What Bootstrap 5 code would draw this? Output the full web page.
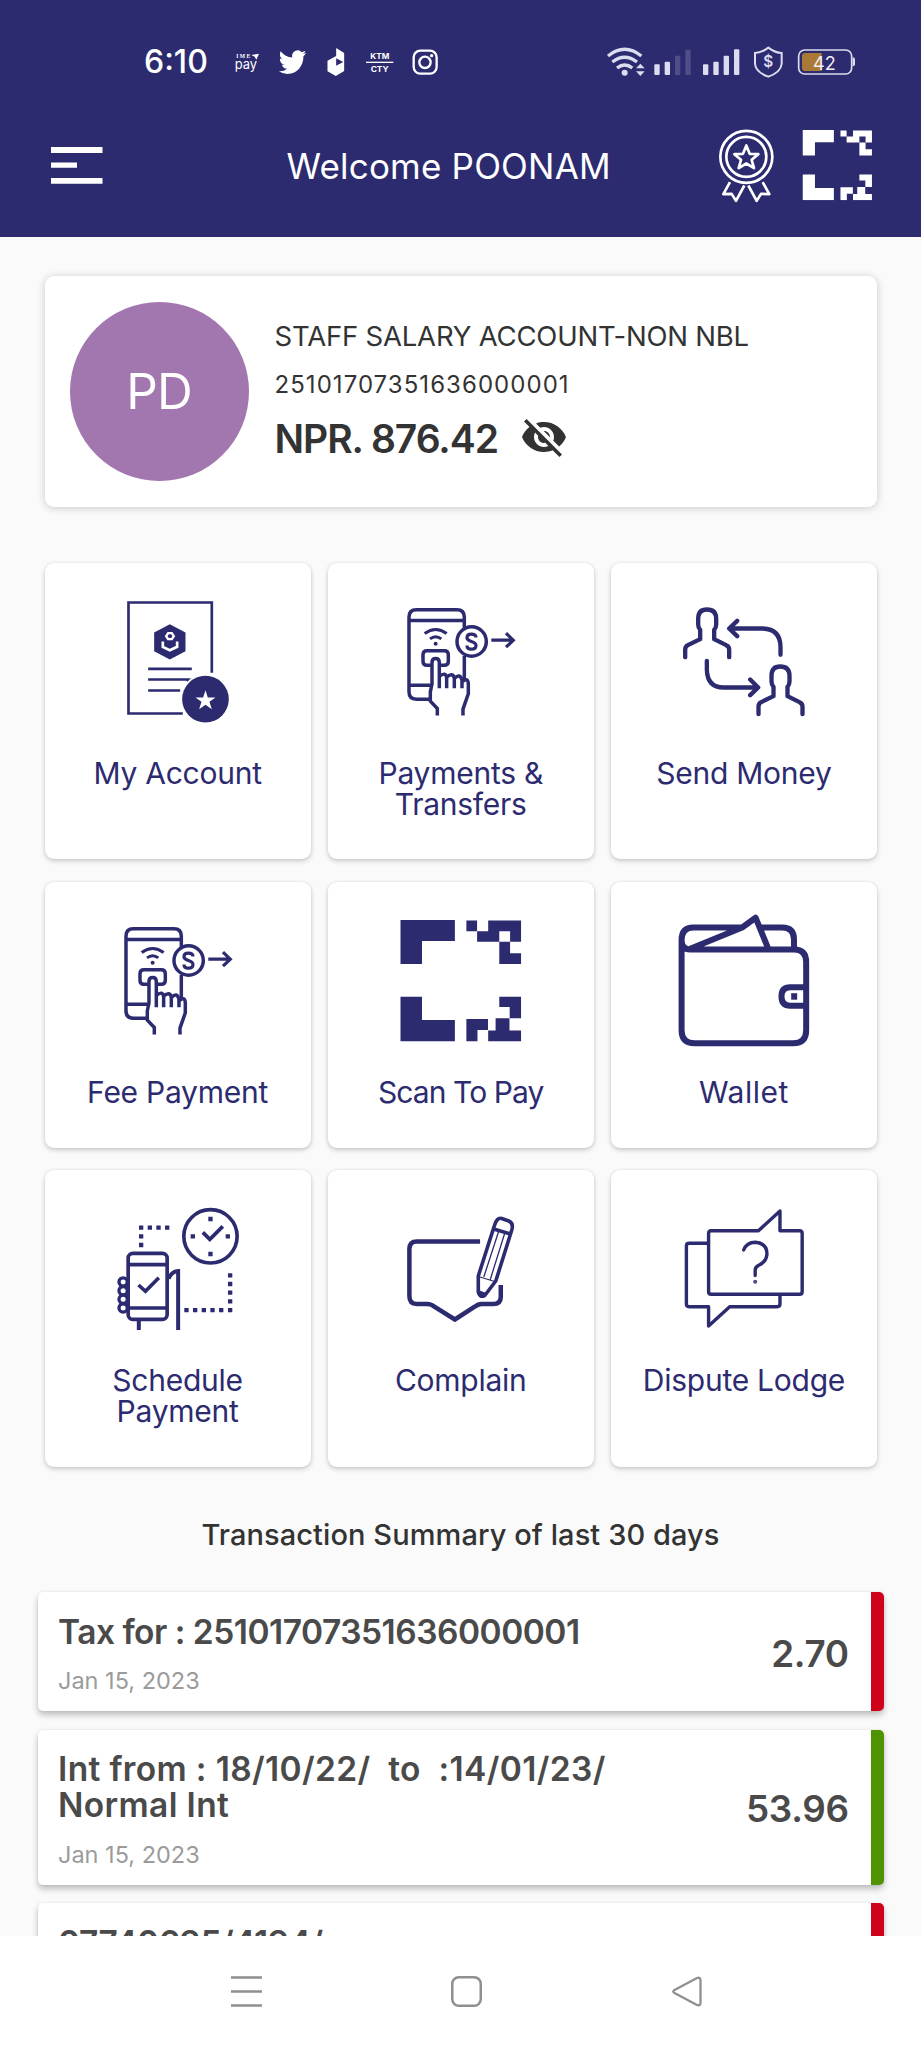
<!DOCTYPE html>
<html lang="en">
<head>
<meta charset="utf-8">
<meta name="viewport" content="width=device-width, initial-scale=1">
<title>Mobile banking</title>
<link href="https://cdn.jsdelivr.net/npm/bootstrap@5.3.0/dist/css/bootstrap.min.css" rel="stylesheet">
<style>
  :root { --navy: #2d2b70; }
  body { font-family: "Inter", "Liberation Sans", sans-serif; background: #fafafa; color: #333; height: 2048px; overflow: hidden; }
  svg { display: block; flex: none; overflow: visible; }
  .ln { fill: none; stroke: currentColor; }
  .app-head { background: var(--navy); height: 237px; color: #fff; }
  .status-row { height: 124px; padding: 0 65px 0 144px; }
  .clock { font-size: 32px; line-height: 40px; font-weight: 500; width: 91px; }
  .notifs { gap: 20px; }
  .sys-icons { gap: 12px; color: #dcdcf0; }
  .app-title { font-size: 35px; line-height: 44px; letter-spacing: .2px; margin-left: 183.5px; width: 433px; }
  .title-row { padding-left: 51px; height: 83px; }
  .scan-btn { margin-left: 30.5px; }
  .panel { background: #fff; border-radius: 9px; box-shadow: 0 2px 5px rgba(0,0,0,.2), 0 0 3px rgba(0,0,0,.06); }
  .account { margin: 39px 44px 0 44.5px; height: 231px; padding-left: 25px; box-shadow: 0 1px 9px rgba(0,0,0,.2); }
  .avatar { width: 179px; height: 179px; background: #a277b0; color: #fff; font-size: 49.5px; letter-spacing: -1px; }
  .acc-info { margin-left: 26px; padding-top: 44px; }
  .acc-name { font-size: 27.5px; line-height: 32px; letter-spacing: -.2px; }
  .acc-no { font-size: 24px; line-height: 30px; margin-top: 18px; letter-spacing: 1.05px; }
  .acc-bal { font-size: 39px; line-height: 48px; font-weight: 600; letter-spacing: -1.05px; margin-top: 15px; }
  .eye-off { margin: 13px 0 0 22px; }
  .tiles { display: grid; grid-template-columns: repeat(3, 1fr); grid-template-rows: 296.5px 266px 296.7px; gap: 22.6px 17px; margin: 55.5px 44px 0 44.5px; }
  .tile { color: var(--navy); text-align: center; }
  .tile svg { width: 100%; height: 180px; }
  .tile-label { font-size: 30px; line-height: 31px; letter-spacing: -.25px; margin-top: 15px; }
  .label-snug { letter-spacing: -.9px; }
  .label-wide { letter-spacing: .5px; }
  .sum-title { font-size: 29px; line-height: 36px; font-weight: 500; letter-spacing: .08px; margin-top: 50px; text-align: center; }
  .feed { height: 383px; padding: 39.5px 37.3px 0 38px; overflow: hidden; }
  .entry { background: #fff; border-radius: 5px; box-shadow: 0 4px 6px rgba(0,0,0,.24), 0 0 3px rgba(0,0,0,.08); border-right: 13px solid #d0021b; color: #4a4a4a; margin-bottom: 18.5px; padding: 0 22px 0 20px; }
  .entry.credit { border-right-color: #4f9400; }
  .entry-text { font-size: 33.5px; line-height: 36px; font-weight: 600; padding-top: 21.5px; letter-spacing: .36px; }
  .entry-text.tight { letter-spacing: -.5px; }
  .entry-date { font-size: 23.5px; line-height: 28px; color: #9b9b9b; margin-top: 17.5px; padding-bottom: 16px; }
  .entry-amt { font-size: 36.8px; font-weight: 600; letter-spacing: -.3px; padding-top: 3px; }
  .sysbar { height: 112.5px; background: #fff; padding: 40.5px 219px 0 231px; color: #8f8f8f; }
</style>
</head>
<body>
<svg width="0" height="0" class="position-absolute" aria-hidden="true">
  <symbol id="scan" viewBox="400 920 121 121.4" preserveAspectRatio="none">
    <path fill="currentColor" fill-rule="evenodd" d="M400 919.7H454.6V941H421.7V964H400ZM466.1 920.7H476.8V931.3H466.1ZM487.9 920.7H520.9V941.8H476.8V931.3H487.9ZM499 931.3V941.8H509.8V931.3ZM499 941.8H509.8V953.3H520.9V964H499ZM400 996.7H421.7V1020H454.6V1041.3H400ZM499 996.7H520.9V1018.3H509.4V1007H499ZM466.1 1019H487.7V1030H477.2V1041.3H466.1ZM495.3 1018.3H509.2V1030.5H520.9V1041.3H487.9V1030.5H495.3Z"/>
  </symbol>
  <symbol id="paytap" viewBox="23 37.5 798.6 540">
    <g class="ln" stroke-width="10.5">
      <path d="M330 446H288Q266 446 266 424V200Q266 178 288 178H410Q432 178 432 200V232M432 316V388M266 210H432M266 404H332"/>
      <circle cx="454" cy="273" r="44"/>
      <path d="M467 261Q467 251 453 251Q440 251 440 262Q440 269 453 273Q467 277 467 285Q467 296 453 296Q440 296 440 285M513 269H577M557 248L579 269L557 290" stroke-width="9.500"/>
      <path d="M313 249Q346 225 379 249M329 265Q346 252 363 265" stroke-width="9"/>
      <path d="M334 344H320Q308 344 308 332V313Q308 301 320 301H372Q384 301 384 313V332Q384 344 372 344H360"/>
      <path d="M351 495V474L330 452V424L335 400V336Q335 324 346 324Q357 324 357 336V413M357 378Q376 362 379 382V413M379 380Q398 364 402 384V413M402 384Q420 366 425 390V413M425 394Q444 378 444 402V430L428 476V495"/>
    </g>
    <circle cx="346" cy="280" r="6" fill="currentColor"/>
  </symbol>
</svg>

<header class="app-head">
  <div class="status-row d-flex align-items-center">
    <div class="clock">6:10</div>
    <div class="notifs d-flex">
      <svg width="23.500" height="32" viewBox="705 76 70.5 96" fill="#fff"><text x="709" y="113" font-size="17" font-family="Liberation Serif" font-weight="700" textLength="42">IME</text><text x="704" y="144" font-size="41" textLength="67" lengthAdjust="spacingAndGlyphs">pay</text><path d="M754 103L777 99L769 117L764 108Z"/></svg>
      <svg width="27" height="32" viewBox="835.5 76 81 96" fill="#fff"><path transform="translate(835 80.6) scale(3.42 3.64)" d="M23.950 4.570a10 10 0 0 1-2.820.78 4.960 4.960 0 0 0 2.160-2.730c-.95.56-2 .96-3.130 1.190a4.920 4.920 0 0 0-8.380 4.480C7.690 8.100 4.070 6.130 1.640 3.160a4.820 4.820 0 0 0-.67 2.480c0 1.710.87 3.210 2.190 4.100a4.900 4.900 0 0 1-2.230-.62v.06a4.920 4.920 0 0 0 3.950 4.830 5 5 0 0 1-2.210.08 4.940 4.940 0 0 0 4.600 3.420A9.870 9.870 0 0 1 0 19.540a13.990 13.990 0 0 0 7.550 2.210c9.050 0 14-7.500 14-13.980 0-.21 0-.42-.02-.63a9.940 9.940 0 0 0 2.460-2.550z"/></svg>
      <svg width="20" height="32" viewBox="978.5 76 60 96" fill="#fff"><path fill-rule="evenodd" d="M1009 82L1033 97V151L1008 166L983 152V120L1009 106ZM1009 113V135L1030 124Z"/></svg>
      <svg width="27" height="32" viewBox="1100 76 81 96" fill="#fff" font-weight="700" font-size="24"><text x="1113" y="114" textLength="57" lengthAdjust="spacingAndGlyphs">KTM</text><path d="M1100 123H1182V127H1100Z"/><text x="1114" y="154" textLength="54" lengthAdjust="spacingAndGlyphs">CTY</text></svg>
      <svg width="25.300" height="32" viewBox="1238 76 76 96"><g class="ln" stroke="#fff" stroke-width="7"><rect x="1240" y="90" width="69" height="69" rx="20"/><circle cx="1274" cy="125" r="17"/></g><circle cx="1294" cy="105" r="5" fill="#fff"/></svg>
    </div>
    <div class="sys-icons d-flex ms-auto">
      <svg width="35" height="32" viewBox="141 76 105 96"><g class="ln" stroke-width="10"><path d="M144 106Q194 66 244 106M157 124Q194 95 231 124M171 142Q194 124 217 142"/></g><circle cx="194" cy="156" r="9" fill="currentColor"/><path fill="currentColor" d="M241 129L254 143H228ZM241 166L254 152H228Z"/></svg>
      <svg width="37" height="32" viewBox="282 76 111 96" fill="currentColor"><rect x="283" y="131" width="16" height="32" rx="3"/><rect x="314" y="123" width="16" height="40" rx="3"/><rect x="345" y="105" width="16" height="58" rx="3" opacity=".2"/><rect x="376" y="87" width="16" height="76" rx="3" opacity=".2"/></svg>
      <svg width="37" height="32" viewBox="428 76 111 96" fill="currentColor"><rect x="428" y="131" width="16" height="32" rx="3"/><rect x="459" y="123" width="16" height="40" rx="3"/><rect x="490" y="105" width="16" height="58" rx="3"/><rect x="521" y="86" width="16" height="77" rx="3"/></svg>
      <svg width="34" height="32" viewBox="578 76 102 96"><path class="ln" stroke-width="6" d="M627 81Q648 97 667 97V130Q664 155 627 168Q590 155 587 130V97Q606 97 627 81Z"/><text x="627" y="140" text-anchor="middle" font-size="46" font-weight="600" fill="currentColor">$</text></svg>
      <svg width="58" height="32" viewBox="717 76 174 96"><rect class="ln" stroke-width="5" x="719" y="88" width="159" height="72" rx="18"/><path fill="#a87a35" d="M739 97H788V151H739Q729 151 729 141V107Q729 97 739 97Z"/><text x="796" y="147" text-anchor="middle" font-size="57" fill="#f2eef0" textLength="68" lengthAdjust="spacingAndGlyphs">42</text><path fill="currentColor" d="M881 110Q888 110 888 116V131Q888 137 881 137Z"/></svg>
    </div>
  </div>
  <div class="title-row d-flex align-items-center">
    <svg width="52" height="37" viewBox="0 0 52 37" fill="#fff"><path d="M0 0H51.500V6H0ZM0 15.500H26V20.800H0ZM0 31H51.500V36.700H0Z"/></svg>
    <div class="app-title">Welcome POONAM</div>
    <svg width="54" height="73" viewBox="482 328 162 218"><g class="ln" stroke="#fff" stroke-width="8" stroke-linejoin="round"><circle cx="561" cy="411" r="78"/><circle cx="561" cy="411" r="60"/><path d="M561 377L571 402L597 403L577 420L584 445L561 431L538 445L545 420L525 403L551 402Z"/><path d="M512 487L492 523L517 522L530 543L555 497M610 487L630 523L605 522L592 543L567 497"/></g></svg>
    <svg class="scan-btn" width="69.500" height="70.300"><use href="#scan" x="-1.500"/></svg>
  </div>
</header>

<section class="panel account d-flex align-items-center">
  <div class="avatar rounded-circle d-flex align-items-center justify-content-center">PD</div>
  <div class="acc-info align-self-start">
    <div class="acc-name">STAFF SALARY ACCOUNT-NON NBL</div>
    <div class="acc-no">25101707351636000001</div>
    <div class="d-flex"><div class="acc-bal">NPR. 876.42</div>
      <svg class="eye-off" width="48" height="48" viewBox="0 0 24 24"><path fill="#333" d="M12 7c2.760 0 5 2.240 5 5 0 .65-.13 1.260-.36 1.830l2.920 2.920c1.510-1.260 2.700-2.890 3.430-4.750-1.730-4.390-6-7.500-11-7.500-1.400 0-2.740.25-3.980.7l2.160 2.160C10.740 7.130 11.350 7 12 7zM2 4.270l2.280 2.280.46.46C3.080 8.300 1.780 10.020 1 12c1.730 4.390 6 7.500 11 7.500 1.550 0 3.030-.3 4.380-.84l.42.42L19.730 22 21 20.730 3.270 3 2 4.270zM7.530 9.800l1.550 1.550c-.05.21-.08.43-.08.65 0 1.660 1.340 3 3 3 .22 0 .44-.03.65-.08l1.550 1.550c-.67.33-1.410.53-2.200.53-2.760 0-5-2.240-5-5 0-.79.2-1.530.53-2.200zm4.310-.78l3.150 3.150.02-.16c0-1.660-1.340-3-3-3l-.17.01z"/></svg>
    </div>
  </div>
</section>

<main class="tiles">
  <div class="panel tile">
    <svg viewBox="43.5 37.5 798.6 540"><path class="ln" stroke-width="8" d="M457 489H294V156H544V367M353 355H484M353 387H472L468 391M353 420H449"/><path fill="currentColor" d="M418 221L465 246V302L418 327L371 302V246Z"/><path fill="none" stroke="#fff" stroke-width="8" d="M397 273V289L418 299L440 289V273"/><path fill="none" stroke="#fff" stroke-width="7" d="M413 248H424L430 257L424 266H413L407 257Z"/><circle cx="525" cy="446" r="70" fill="currentColor"/><path fill="#fff" d="M525 419L532 441H555L537 454L544 476L525 463L506 476L513 454L495 441H518Z"/></svg>
    <div class="tile-label">My Account</div>
  </div>
  <div class="panel tile">
    <svg viewBox="23 37.5 798.6 540"><use href="#paytap" x="23" y="37.5" width="798.6" height="540"/></svg>
    <div class="tile-label">Payments &amp;<br>Transfers</div>
  </div>
  <div class="panel tile">
    <svg viewBox="32.4 37.5 798.6 540"><g class="ln" stroke-width="13" stroke-linecap="round" stroke-linejoin="round"><path id="person" d="M255 320V297Q255 288 263 284L300 266V238Q294 232 294 222V205Q294 177 320 177Q348 177 348 205V222Q348 232 342 238V266L378 284Q387 288 387 297V320"/><use href="#person" x="220" y="171"/><path d="M388 234H488Q541 236 541 290V313M411 211L387 234L411 257M320 331V358Q322 411 370 411H473M450 387L474 411L450 434"/></g></svg>
    <div class="tile-label">Send Money</div>
  </div>
  <div class="panel tile">
    <svg viewBox="23 37.5 798.6 540"><use href="#paytap" x="23" y="37.5" width="798.6" height="540"/></svg>
    <div class="tile-label">Fee Payment</div>
  </div>
  <div class="panel tile">
    <svg viewBox="327.7 881.8 266.2 180"><use href="#scan" x="400" y="919.700" width="121" height="121.600"/></svg>
    <div class="tile-label label-snug">Scan To Pay</div>
  </div>
  <div class="panel tile">
    <svg viewBox="610.8 881.8 266.2 180"><g class="ln" stroke-width="6" stroke-linejoin="round"><path d="M681.400 940V1030Q681.400 1043 694.500 1043H793Q806 1043 806 1030V962Q806 949.300 794 949.300H690Q681.400 949 681.400 940Q681.400 927.300 693 927.300H742M758 927.300H782Q793.800 927.300 793.800 939V949M690 948.500L742 927.300L755.400 917.500L768.300 949M806 987H790Q781.300 987 781.300 996Q781.300 1005.500 790 1005.500H806"/></g><path fill="currentColor" d="M791 993H797V999.500H791Z"/></svg>
    <div class="tile-label label-wide">Wallet</div>
  </div>
  <div class="panel tile">
    <svg viewBox="43.5 30 798.6 540"><g class="ln" stroke-width="11"><circle cx="540" cy="229" r="80"/><path d="M517 217L538 238L577 199M324 375L345 394L385 353"/><g stroke-width="10"><circle cx="278" cy="366" r="12.500"/><circle cx="278" cy="392" r="12.500"/><circle cx="278" cy="418" r="12.500"/><circle cx="278" cy="444" r="12.500"/></g><rect x="293" y="280" width="117" height="198" rx="14"/><path d="M293 314H410M293 444H410"/><path stroke-width="12" d="M325 480V510M414 356Q424 334 443 333V510"/></g>
    <g fill="none" stroke="currentColor" stroke-width="13"><path stroke-dasharray="13 13.050" d="M325.500 203H417M332 222.500V262M599 339.500V457M461.500 450.500H580"/></g><path fill="currentColor" d="M533.500 170.500H546.500V183.500H533.500ZM533.500 275.500H546.500V288.500H533.500ZM480.500 222.500H493.500V235.500H480.500ZM585.500 222.500H598.500V235.500H585.500Z"/></svg>
    <div class="tile-label">Schedule<br>Payment</div>
  </div>
  <div class="panel tile">
    <svg viewBox="327.7 1170 266.2 180"><g class="ln" stroke-width="4.500"><path d="M479.800 1241.500H416.500Q409.100 1241.500 409.100 1249V1296Q409.100 1304 416.500 1304H427Q431 1304 434.500 1307L454.600 1319.500L474 1307Q478 1304 481 1304H493Q500.500 1304 500.500 1297V1285"/><path stroke-width="3.600" stroke-linejoin="round" d="M478 1276L494 1226Q496.500 1217 501.500 1218.500L508.500 1221Q513.500 1223 511.500 1230L495.500 1281L484.500 1295.500Q479 1298 478 1292ZM493.500 1229L510.500 1234"/><path stroke-width="1.300" d="M478 1276.500L494.500 1281.500M498.500 1231L483.500 1277M504.500 1233L490 1279.500"/></g><path fill="currentColor" d="M478 1290L486 1293L482 1297.500L478.500 1296Z"/></svg>
    <div class="tile-label">Complain</div>
  </div>
  <div class="panel tile">
    <svg viewBox="610.8 1170 266.2 180"><g class="ln" stroke="#4b4986" stroke-width="3.400" stroke-linejoin="round"><path d="M711 1230.700H758.300L779.800 1211V1230.700H799.500Q802 1230.700 802 1233.500V1291.500Q802 1294.300 799.500 1294.300H711Q708.400 1294.300 708.400 1291.500V1233.500Q708.400 1230.700 711 1230.700ZM708 1243.300H689Q686.200 1243.300 686.200 1246V1304Q686.200 1306.700 689 1306.700H708.400V1326L729.500 1306.700H777Q779.800 1306.700 779.800 1304V1295"/><path stroke-linecap="round" d="M743.500 1250Q746.500 1242.200 755 1242.200Q766.800 1243 766.800 1254.300Q766 1262 759 1265Q755 1267 755 1270V1275.500"/></g><circle cx="755" cy="1281.700" r="2" fill="#4b4986"/></svg>
    <div class="tile-label">Dispute Lodge</div>
  </div>
</main>

<h2 class="sum-title mb-0">Transaction Summary of last 30 days</h2>
<section class="feed">
  <div class="entry d-flex">
    <div class="flex-grow-1"><div class="entry-text tight">Tax for : 25101707351636000001</div><div class="entry-date">Jan 15, 2023</div></div>
    <div class="entry-amt align-self-center">2.70</div>
  </div>
  <div class="entry credit d-flex">
    <div class="flex-grow-1"><div class="entry-text">Int from : 18/10/22/&nbsp; to&nbsp; :14/01/23/<br>Normal Int</div><div class="entry-date">Jan 15, 2023</div></div>
    <div class="entry-amt align-self-center">53.96</div>
  </div>
  <div class="entry d-flex">
    <div class="flex-grow-1"><div class="entry-text tight">07740695/4194/</div></div>
  </div>
</section>

<nav class="sysbar d-flex justify-content-between align-items-start">
  <svg width="31" height="31" viewBox="0 0 31 31"><path class="ln" stroke-width="2.500" d="M0 1.500H31M0 15.500H31M0 29.500H31"/></svg>
  <svg width="31" height="31" viewBox="0 0 31 31"><rect class="ln" stroke-width="2.500" x="0.250" y="1.250" width="28.500" height="28.500" rx="6.500"/></svg>
  <svg width="30" height="31" viewBox="0 0 30 31"><path class="ln" stroke-width="2.300" stroke-linejoin="round" d="M2.500 14L25 2Q28.500 1 28.500 4V27Q28.500 30 25 29L2.500 17Q0 15.500 2.500 14Z"/></svg>
</nav>
<script src="https://cdn.jsdelivr.net/npm/bootstrap@5.3.0/dist/js/bootstrap.bundle.min.js"></script>
</body>
</html>
